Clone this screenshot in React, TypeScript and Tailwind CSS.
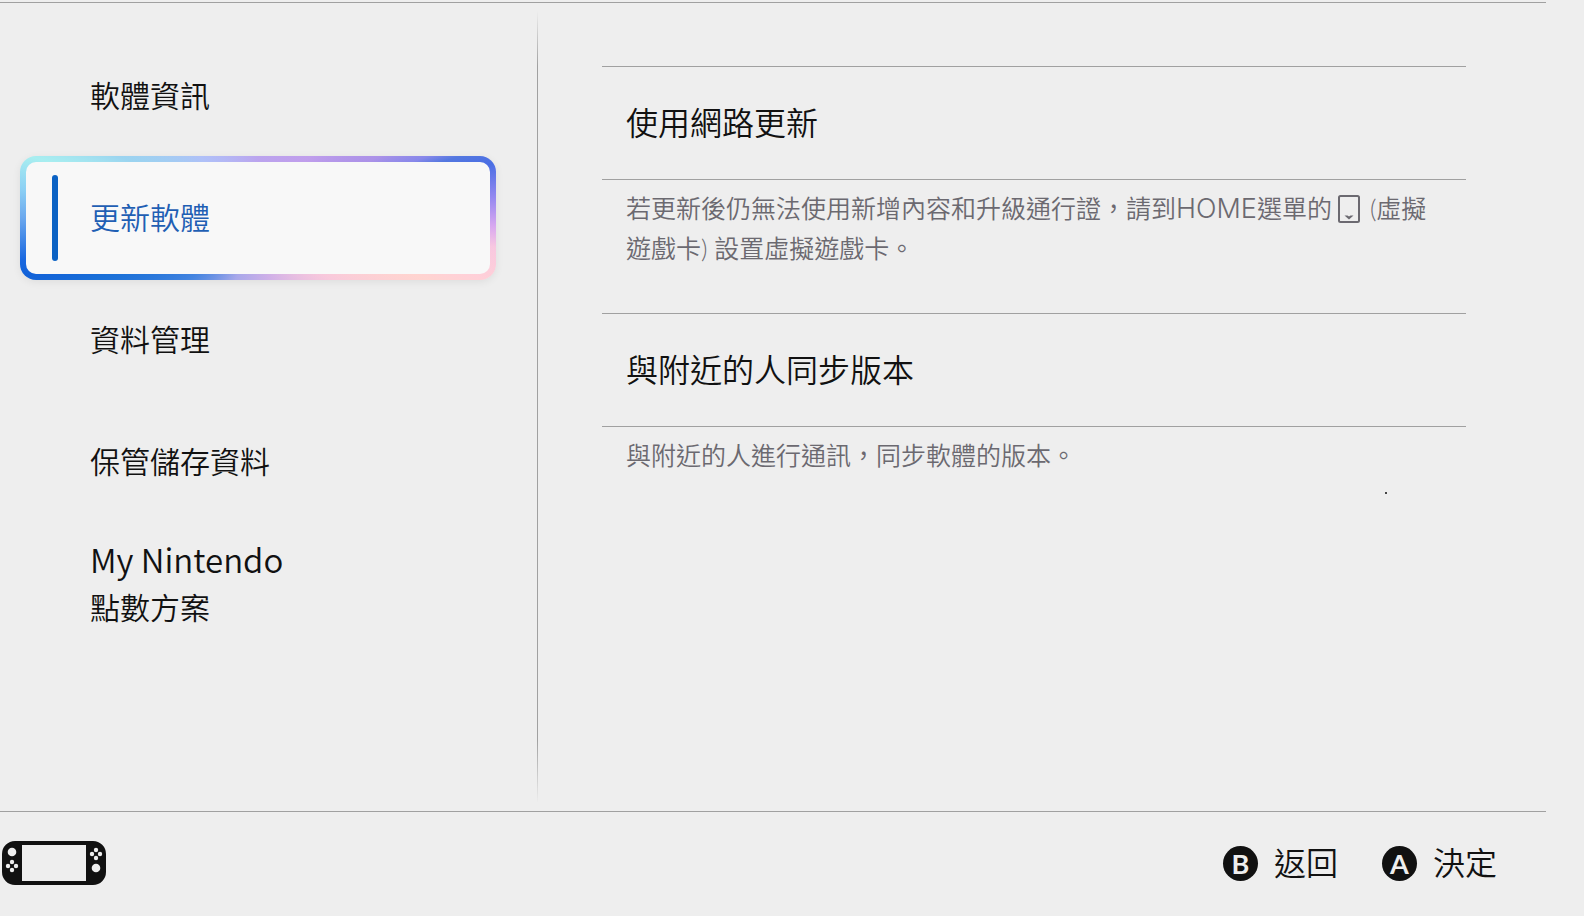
import type { ReactNode } from 'react';

interface MenuItem {
  id: string;
  lines: { text: string; latin?: boolean }[];
}

const menuItems: MenuItem[] = [
  { id: 'info', lines: [{ text: '軟體資訊' }] },
  { id: 'update', lines: [{ text: '更新軟體' }] },
  { id: 'data', lines: [{ text: '資料管理' }] },
  { id: 'save', lines: [{ text: '保管儲存資料' }] },
  { id: 'points', lines: [{ text: 'My Nintendo', latin: true }, { text: '點數方案' }] },
];

const VirtualCardIcon = () => (
  <svg className="ml-[6px] mr-[10px] inline-block h-7 w-[22px] align-[-5px]" viewBox="0 0 22 28" fill="none" role="img" aria-label="虛擬遊戲卡">
    <rect x="1" y="1" width="20" height="26" rx="1.5" stroke="currentColor" strokeWidth="2" />
    <path d="M6.5 20.5h3l1.5 1 1.5-1h3L11 24.5z" fill="currentColor" />
  </svg>
);

const ConsoleIcon = () => (
  <svg className="h-11 w-[104px]" viewBox="0 0 104 44" role="img" aria-label="主機">
    <path
      fill="#111"
      fillRule="evenodd"
      d="M13 0h78a13 13 0 0 1 13 13v18a13 13 0 0 1-13 13H13A13 13 0 0 1 0 31V13A13 13 0 0 1 13 0zM20 4v36h64V4z"
    />
    <g fill="#eee">
      <circle cx="10" cy="11" r="4.3" />
      <circle cx="10" cy="21" r="2.2" />
      <circle cx="10" cy="29" r="2.2" />
      <circle cx="6" cy="25" r="2.2" />
      <circle cx="14" cy="25" r="2.2" />
      <circle cx="94" cy="9" r="2.2" />
      <circle cx="94" cy="17" r="2.2" />
      <circle cx="90" cy="13" r="2.2" />
      <circle cx="98" cy="13" r="2.2" />
      <circle cx="94" cy="27" r="4.3" />
    </g>
  </svg>
);

interface MenuButtonProps {
  item: MenuItem;
  active: boolean;
}

const MenuButton = ({ item, active }: MenuButtonProps) => (
  <button
    type="button"
    aria-current={active ? 'page' : undefined}
    className={`flex h-[124px] w-full items-center rounded-2xl border-[6px] border-transparent text-left text-[30px] ${
      active
        ? 'text-[#1f5fb4] shadow-[0_2px_8px_rgba(0,0,0,0.07)] [background:linear-gradient(#f8f8f8,#f8f8f8)_padding-box,conic-gradient(#bba4ee_0deg,#c09eec_40deg,#ac92e8_63deg,#8888ea_70deg,#5478e0_73deg,#4a6ee4_77deg,#9488f0_85deg,#d8a8f0_92deg,#f8c8e0_97deg,#ffd0d8_105deg,#ffd4d0_110deg,#f8c8dc_131deg,#d0b0e8_169deg,#a8a8ea_200deg,#4484e0_228deg,#1a70d8_249deg,#1262d8_256deg,#1a68e0_260deg,#6ba8ee_270deg,#8cd0f4_277deg,#a8eef0_285deg,#9bd4f0_294deg,#b0c0f8_317deg,#bba4ee_360deg)_border-box]'
        : 'text-[#111]'
    }`}
  >
    <span className={`ml-[26px] mr-8 h-[86px] w-[6px] rounded-full ${active ? 'bg-[#0b62c4]' : ''}`} />
    <span className="flex flex-col pb-[2px]">
      {item.lines.map((line) => (
        <span
          key={line.text}
          className={line.latin ? "font-['Noto_Sans_CJK_TC',sans-serif] text-[33px] leading-12" : 'leading-12'}
        >
          {line.text}
        </span>
      ))}
    </span>
  </button>
);

interface OptionProps {
  title: string;
  children: ReactNode;
}

const Option = ({ title, children }: OptionProps) => (
  <section className="first:mb-[43px]">
    <button
      type="button"
      className="flex h-[114px] w-full items-center border-y border-[#a0a0a0] px-6 text-left text-[32px] text-[#111]"
    >
      {title}
    </button>
    <p className="px-6 pb-[2px] pt-2 text-[25px] leading-10 text-[#6b6970]">{children}</p>
  </section>
);

interface HintProps {
  letter: string;
  label: string;
}

const Hint = ({ letter, label }: HintProps) => (
  <button type="button" className="flex items-center gap-4 text-[32px] leading-12 text-[#111]">
    <span className="flex size-[35px] items-center justify-center rounded-full bg-[#111] text-[27px] font-bold leading-none text-[#eee]">
      {letter}
    </span>
    {label}
  </button>
);

const App = () => (
  <div
    lang="zh-Hant"
    className="flex min-h-screen flex-col bg-[#eee] pt-[2px] font-['Lato','Noto_Sans_CJK_TC',sans-serif] font-[350]"
  >
    <main className="mr-[38px] flex flex-1 border-y border-[#a0a0a0]">
      {/* Side menu */}
      <nav className="flex w-[35%] max-w-[537px] flex-col -space-y-[2px] pl-5 pr-[41px] pt-[31px]">
        {menuItems.map((item) => (
          <MenuButton key={item.id} item={item} active={item.id === 'update'} />
        ))}
      </nav>
      <div className="my-2 w-px bg-[linear-gradient(transparent,#a0a0a0_7%,#a0a0a0_92%,transparent)]" />

      {/* Update options */}
      <div className="flex flex-1 flex-col pl-16 pr-20 pt-[63px]">
        <Option title="使用網路更新">
          若更新後仍無法使用新增內容和升級通行證，請到
          <span className="font-[Inter] text-[27px] leading-none">HOME</span>
          選單的
          <VirtualCardIcon />
          (虛擬遊戲卡) 設置虛擬遊戲卡。
        </Option>
        <Option title="與附近的人同步版本">與附近的人進行通訊，同步軟體的版本。</Option>
        <span className="mr-[79px] mt-[15px] size-[2px] self-end bg-[#444]" />
      </div>
    </main>

    <footer className="flex h-[104px] items-center justify-between pb-[2px] pl-[2px] pr-[87px]">
      <ConsoleIcon />
      <div className="flex gap-11">
        <Hint letter="B" label="返回" />
        <Hint letter="A" label="決定" />
      </div>
    </footer>
  </div>
);

export default App;
